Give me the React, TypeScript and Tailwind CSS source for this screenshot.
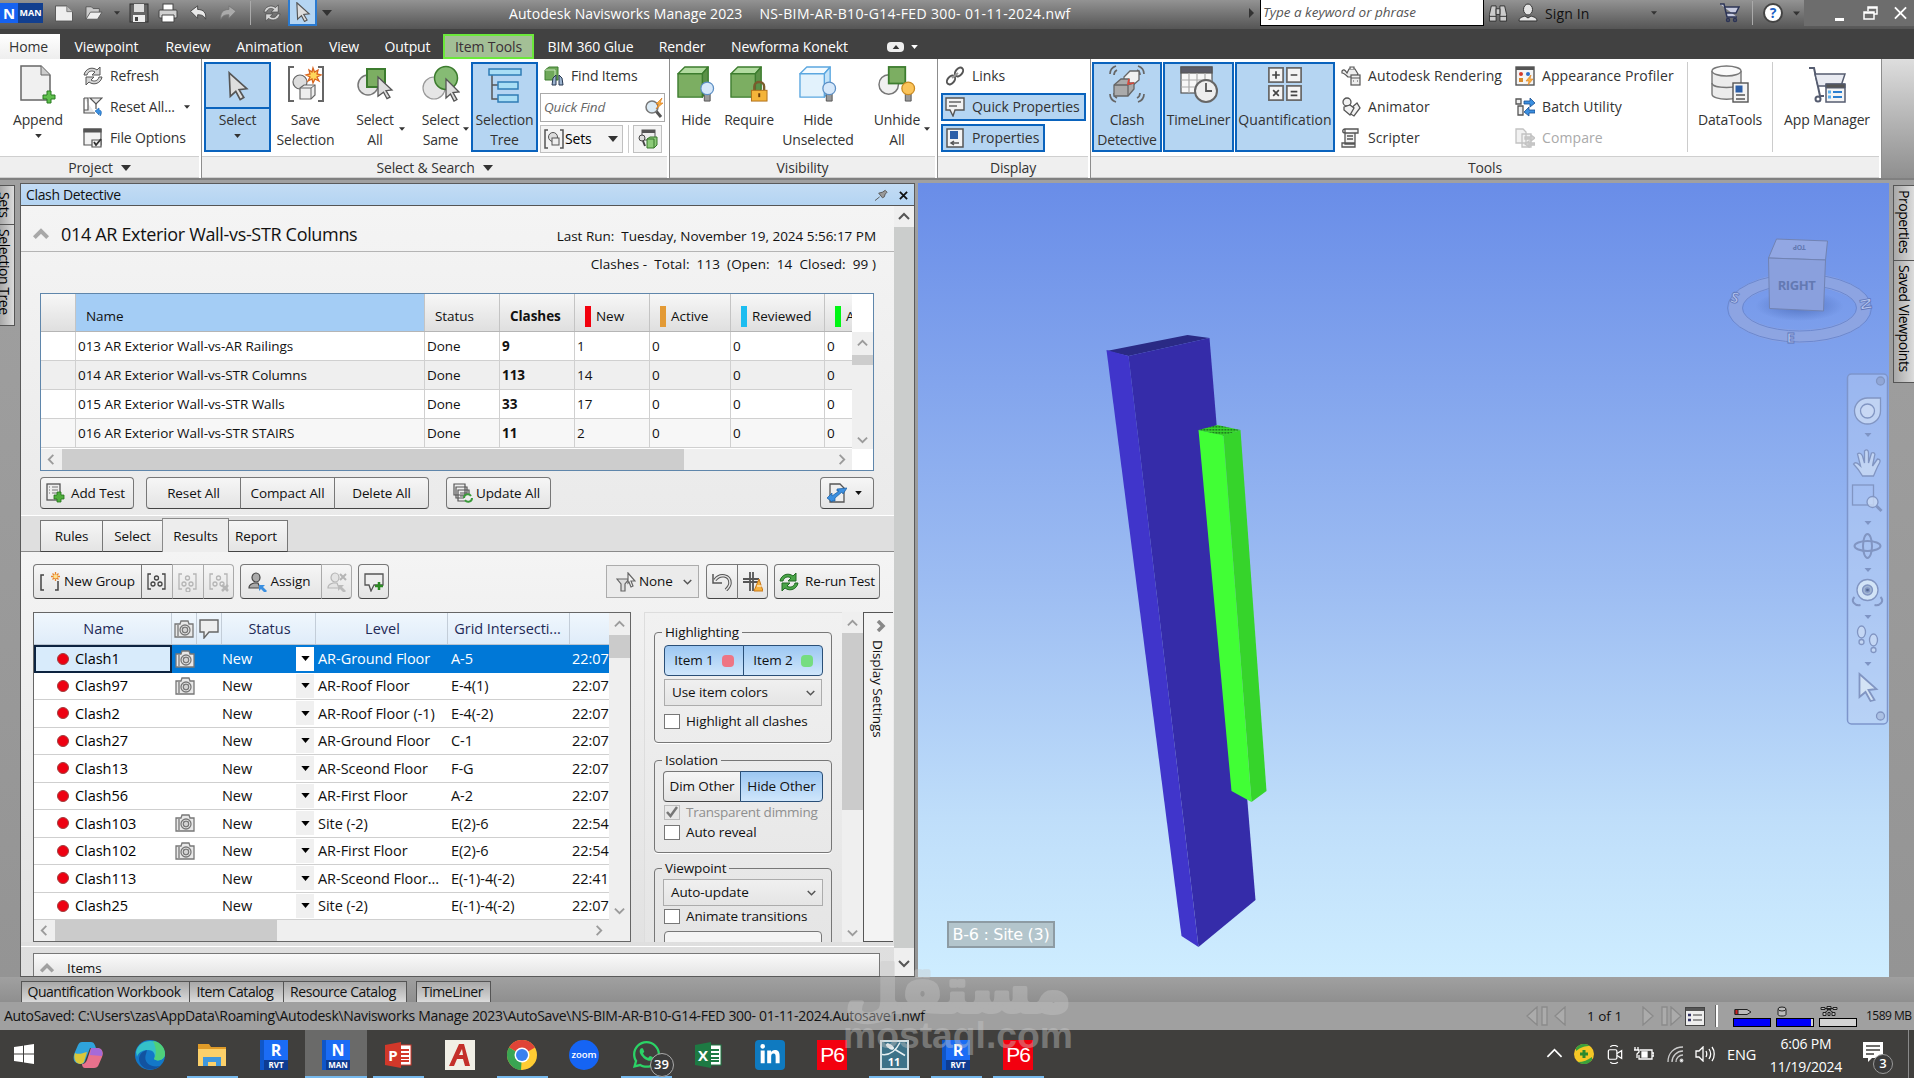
import React from 'react';
import { FaLinkedinIn, FaWhatsapp } from 'react-icons/fa';

type SvgProps = { className?: string };
type IconType = React.FC<SvgProps>;

//================== Data ==================
const ribbonTabs = [
  { label: 'Viewpoint', cls: 'w-[93px]' },
  { label: 'Review', cls: 'w-[70px]' },
  { label: 'Animation', cls: 'w-[93px]' },
  { label: 'View', cls: 'w-[56px]' },
  { label: 'Output', cls: 'w-[71px]' },
  { label: 'Item Tools', cls: 'w-[91px] bg-[#a3bf96] border-2 border-[#6be83a] text-[#3b2f36]' },
  { label: 'BIM 360 Glue', cls: 'w-[113px]' },
  { label: 'Render', cls: 'w-[70px]' },
  { label: 'Newforma Konekt', cls: 'w-[145px]' },
];

const tests = [
  ['013 AR Exterior Wall-vs-AR Railings', 'Done', '9', '1'],
  ['014 AR Exterior Wall-vs-STR Columns', 'Done', '113', '14'],
  ['015 AR Exterior Wall-vs-STR Walls', 'Done', '33', '17'],
  ['016 AR Exterior Wall-vs-STR STAIRS', 'Done', '11', '2'],
];
const testRowBg = ['bg-white', 'bg-[#efefef]', 'bg-white', 'bg-[#f7f7f7]'];

const clashes = [
  { name: 'Clash1', cam: true, level: 'AR-Ground Floor', grid: 'A-5', time: '22:07:' },
  { name: 'Clash97', cam: true, level: 'AR-Roof Floor', grid: 'E-4(1)', time: '22:07:' },
  { name: 'Clash2', cam: false, level: 'AR-Roof Floor (-1)', grid: 'E-4(-2)', time: '22:07:' },
  { name: 'Clash27', cam: false, level: 'AR-Ground Floor', grid: 'C-1', time: '22:07:' },
  { name: 'Clash13', cam: false, level: 'AR-Sceond Floor', grid: 'F-G', time: '22:07:' },
  { name: 'Clash56', cam: false, level: 'AR-First Floor', grid: 'A-2', time: '22:07:' },
  { name: 'Clash103', cam: true, level: 'Site (-2)', grid: 'E(2)-6', time: '22:54:' },
  { name: 'Clash102', cam: true, level: 'AR-First Floor', grid: 'E(2)-6', time: '22:54:' },
  { name: 'Clash113', cam: false, level: 'AR-Sceond Floor...', grid: 'E(-1)-4(-2)', time: '22:41:' },
  { name: 'Clash25', cam: false, level: 'Site (-2)', grid: 'E(-1)-4(-2)', time: '22:07:' },
];

//================== Small shapes ==================
const Caret: React.FC<SvgProps> = ({ className = '' }) => (
  <svg viewBox="0 0 10 6" className={`shrink-0 ${className}`} fill="currentColor"><path d="M0 0h10L5 6z" /></svg>
);

const Chevron: React.FC<{ dir: 'up' | 'down' | 'left' | 'right'; className?: string; w?: number }> = ({ dir, className = '', w = 2 }) => {
  const paths = { up: 'M1 8l5-5 5 5', down: 'M1 4l5 5 5-5', left: 'M8 1L3 6l5 5', right: 'M4 1l5 5-5 5' };
  return (
    <svg viewBox="0 0 12 12" className={`shrink-0 ${className}`} fill="none" stroke="currentColor" strokeWidth={w}>
      <path d={paths[dir]} />
    </svg>
  );
};

const Cursor: IconType = ({ className }) => (
  <svg viewBox="0 0 20 26" className={className}><path d="M2 1l16 14.5-7 .8 4.3 7.2-3.3 1.8-4-7.5-5 4.6z" fill="#dedede" stroke="#555" strokeWidth="1.5" /></svg>
);

//================== Quick access icons ==================
const DocIcon: IconType = ({ className }) => (
  <svg viewBox="0 0 20 18" className={className}><path d="M1 1h12l6 6v10H1z" fill="#eee" stroke="#555" /><path d="M13 1v6h6" fill="#bbb" stroke="#777" /></svg>
);
const OpenIcon: IconType = ({ className }) => (
  <svg viewBox="0 0 20 18" className={className} stroke="#555"><path d="M1 16V2h6l2 2h7v4" fill="#ccc" /><path d="M1 16L6 8h13l-5 8z" fill="#eee" /></svg>
);
const SaveIcon: IconType = ({ className }) => (
  <svg viewBox="0 0 20 20" className={className}><rect x="1" y="1" width="18" height="18" fill="#666" stroke="#333" /><rect x="5" y="1" width="10" height="8" fill="#ddd" /><rect x="4" y="12" width="12" height="7" fill="#eee" /><rect x="6" y="14" width="3" height="4" fill="#444" /></svg>
);
const PrintIcon: IconType = ({ className }) => (
  <svg viewBox="0 0 20 20" className={className} stroke="#444"><rect x="5" y="1" width="10" height="7" fill="#fff" /><rect x="1" y="7" width="18" height="8" rx="1" fill="#d0d0d0" /><path d="M4 12h12v7H4z" fill="#fff" /></svg>
);
const UndoIcon: IconType = ({ className }) => (
  <svg viewBox="0 0 20 18" className={className}><path d="M1 7l8-6v4c7 0 10 4 9 11-2-4-4-5-9-5v4z" fill="#e8e8e8" stroke="#444" /></svg>
);
const RedoIcon: IconType = ({ className }) => (
  <svg viewBox="0 0 20 18" className={className}><path d="M19 7l-8-6v4C4 5 1 9 2 16c2-4 4-5 9-5v4z" fill="#aaa" stroke="#777" /></svg>
);
const SyncIcon: React.FC<{ className?: string; fill?: string; stroke?: string }> = ({ className, fill = '#d6d6d6', stroke = '#555' }) => (
  <svg viewBox="0 0 20 20" className={className} fill={fill} stroke={stroke} strokeWidth="1">
    <path d="M1 9C2 3 9 0 14 4l3-3v8H9l3-3C9 4 5 5 4 9z" />
    <path d="M19 11c-1 6-8 9-13 5l-3 3v-8h8l-3 3c3 2 7 1 8-3z" />
  </svg>
);
const BinocularsIcon: IconType = ({ className }) => (
  <svg viewBox="0 0 20 20" className={className} fill="#ccc" stroke="#333"><path d="M3 2h5v16H1V11zM12 2h5l2 9v7h-7z" /><path d="M8 5h4v6H8z" /><path d="M1 13h7M12 13h7" /></svg>
);
const PersonIcon: IconType = ({ className }) => (
  <svg viewBox="0 0 20 20" className={className} fill="#e4e4e4" stroke="#333"><ellipse cx="10" cy="6.500" rx="4.500" ry="5.500" /><path d="M1 18c0-4 4-4 6-5l3 2 3-2c2 1 6 1 6 5z" /></svg>
);
const CartIcon: IconType = ({ className }) => (
  <svg viewBox="0 0 20 20" className={className} fill="none" stroke="#2c3456" strokeWidth="1.500"><path d="M0 1h4l3 13h10M4.500 4H19l-3 6H6" fill="#c8cce0" /><circle cx="8" cy="17" r="1.500" /><circle cx="15" cy="17" r="1.500" /></svg>
);

//================== Ribbon icons ==================
const AppendIcon: IconType = ({ className }) => (
  <svg viewBox="0 0 38 40" className={className}><path d="M2 2h20l9 9v25H2z" fill="#f0f0f0" stroke="#666" strokeWidth="1.500" /><path d="M22 2v9h9" fill="#ccc" stroke="#666" /><path d="M28 27h4v4h4v4h-4v4h-4v-4h-4v-4h4z" fill="#5fbf4c" stroke="#287a20" /></svg>
);
const ResetIcon: IconType = ({ className }) => (
  <svg viewBox="0 0 20 20" className={className} fill="#e8e8e8" stroke="#555" strokeWidth="1.200"><path d="M1 1v15h11M1 1h4v12H1M7 1h12l-6 6z" /><path d="M13 7v5" /><path d="M12 14l4-3v2c3 0 3 4 1 6 0-2 0-3-1-3v2z" fill="#3b8fe0" stroke="#1a62ab" strokeWidth=".6" /></svg>
);
const FileOptIcon: IconType = ({ className }) => (
  <svg viewBox="0 0 20 20" className={className} fill="#f3f3f3" stroke="#555" strokeWidth="1.200"><path d="M1 1h17v16H1z" /><path d="M1 1h17v3H1z" fill="#555" /><path d="M9 12h9v7H9z" /><path d="M11 14l2 3 5-6" fill="none" stroke="#333" strokeWidth="1.800" /></svg>
);
const SaveSelIcon: IconType = ({ className }) => (
  <svg viewBox="0 0 38 38" className={className} fill="none" stroke="#666" strokeWidth="2"><path d="M7 2H2v34h5M31 2h5v34h-5" /><circle cx="13" cy="17" r="7" fill="#ddd" strokeWidth="1.200" /><path d="M13 23l4-3h11v10l-4 4H13z" fill="#eee" strokeWidth="1.200" /><path d="M13 23h11v11M24 23l4-3" strokeWidth="1" /><path d="M26 3l1.500 4L31 5l-1 4 4 1-4 2 2 4-4-2-2 4-1-4-4 2 2-4-4-2 4-1-1-4 3 2z" fill="#ffd65a" stroke="#d9641f" strokeWidth="1.300" /></svg>
);
const SelAllIcon: IconType = ({ className }) => (
  <svg viewBox="0 0 38 38" className={className}><circle cx="12" cy="20" r="10" fill="#e6e6e6" stroke="#777" strokeWidth="1.500" /><rect x="11" y="4" width="18" height="18" fill="#7cae62" stroke="#3c7c2e" strokeWidth="2" /><path d="M22 12l14 13-6 .7 4 6.500-3 1.500-3.500-6.500-5.500 4z" fill="#ddd" stroke="#555" strokeWidth="1.300" /></svg>
);
const SelSameIcon: IconType = ({ className }) => (
  <svg viewBox="0 0 38 38" className={className}><circle cx="12" cy="23" r="11" fill="#e6e6e6" stroke="#999" strokeWidth="1.200" /><circle cx="24" cy="13" r="11.500" fill="#86bb74" stroke="#3c7c2e" strokeWidth="1.500" /><path d="M24 14l13 13-6 .6 4 7-3 1.500-3.500-7-4.500 4z" fill="#ddd" stroke="#555" strokeWidth="1.300" /></svg>
);
const TreeIcon: IconType = ({ className }) => (
  <svg viewBox="0 0 34 36" className={className} fill="#a9def5" stroke="#2f7cb5" strokeWidth="1.500"><path d="M4 8v24h6M4 18h6" fill="none" stroke="#555" /><rect x="1" y="2" width="32" height="6" /><rect x="10" y="15" width="20" height="7" /><rect x="10" y="28" width="20" height="7" /></svg>
);
const Cube: React.FC<{ front: string; top: string; side: string; line: string }> = ({ front, top, side, line }) => (
  <g stroke={line} strokeWidth="1.400" strokeLinejoin="round">
    <path d="M1 9l7-7h24l-6 7z" fill={top} /><path d="M26 9l6-7v23l-6 8z" fill={side} /><path d="M1 9h25v24H1z" fill={front} />
  </g>
);
const Bulb: React.FC<{ fill: string; line: string }> = ({ fill, line }) => (
  <g><path d="M28 29h6v8h-6z" fill="#999" stroke="#555" /><circle cx="31" cy="24" r="6.500" fill={fill} stroke={line} strokeWidth="1.300" /></g>
);
const HideIcon: IconType = ({ className }) => (
  <svg viewBox="0 0 39 39" className={className}><Cube front="#7cae62" top="#b2dba0" side="#5b9147" line="#3c7c2e" /><Bulb fill="#d6e8fa" line="#5d8fc4" /></svg>
);
const RequireIcon: IconType = ({ className }) => (
  <svg viewBox="0 0 39 39" className={className}><Cube front="#7cae62" top="#b2dba0" side="#5b9147" line="#3c7c2e" /><path d="M25 26v-4c0-6 10-6 10 0v4" fill="none" stroke="#7a5c2c" strokeWidth="2.500" /><rect x="22" y="26" width="16" height="11" fill="#f4b43a" stroke="#b0701a" /><path d="M30 29v4" stroke="#6a3c0a" strokeWidth="2" /></svg>
);
const HideUnselIcon: IconType = ({ className }) => (
  <svg viewBox="0 0 39 39" className={className}><Cube front="#e2f2fc" top="#f4fbff" side="#c3e3f8" line="#5ba7e0" /><Bulb fill="#d6e8fa" line="#5d8fc4" /></svg>
);
const UnhideIcon: IconType = ({ className }) => (
  <svg viewBox="0 0 39 39" className={className}><circle cx="11" cy="20" r="10" fill="#f0f0f0" stroke="#777" strokeWidth="1.500" /><rect x="11" y="2" width="17" height="17" fill="#7cae62" stroke="#3c7c2e" strokeWidth="1.800" /><Bulb fill="#fbc45a" line="#c98a22" /></svg>
);
const FindIcon: IconType = ({ className }) => (
  <svg viewBox="0 0 20 20" className={className}><path d="M1 4l4-3h9v13H1z" fill="#6fa85a" stroke="#3c7c2e" /><path d="M1 4h10v11" fill="none" stroke="#c9e6bd" /><path d="M9 12l3-3v10H8zM15 9l3 3 1 7h-4z" fill="#9db4d0" stroke="#26374f" /></svg>
);
const SearchBoltIcon: IconType = ({ className }) => (
  <svg viewBox="0 0 20 22" className={className}><path d="M12 14l5 6" stroke="#555" strokeWidth="3" /><circle cx="8" cy="10" r="6" fill="#dcebf5" stroke="#777" strokeWidth="1.500" /><path d="M18 1l-6 6h3l-3 5 7-6h-3z" fill="#f8b040" stroke="#dc7d1c" strokeWidth=".7" /></svg>
);
const SetsIcon: IconType = ({ className }) => (
  <svg viewBox="0 0 20 20" className={className} fill="none" stroke="#555" strokeWidth="1.500"><path d="M4 1H1v18h3M16 1h3v18h-3" /><circle cx="9" cy="8" r="4.500" fill="#ddd" strokeWidth="1" /><rect x="8" y="9" width="7" height="7" fill="#eee" strokeWidth="1" /></svg>
);
const InspectIcon: IconType = ({ className }) => (
  <svg viewBox="0 0 20 20" className={className}><rect x="4" y="1" width="13" height="10" fill="#eee" stroke="#555" /><path d="M4 1h13v3H4z" fill="#555" /><circle cx="4" cy="9" r="3" fill="#ddd" stroke="#444" /><path d="M5 12l2 5" stroke="#444" strokeWidth="2" /><path d="M9 10l3-2h7v8l-3 3H9z" fill="#8ccb78" stroke="#36772a" /><path d="M9 10h7v9" fill="none" stroke="#36772a" /></svg>
);
const LinkIcon: IconType = ({ className }) => (
  <svg viewBox="0 0 20 20" className={className} fill="none" stroke="#555" strokeWidth="2"><ellipse cx="14" cy="6" rx="5" ry="3.300" transform="rotate(-50 14 6)" /><ellipse cx="6" cy="14" rx="5" ry="3.300" transform="rotate(-50 6 14)" /><path d="M7 12l6-5" stroke="#999" /></svg>
);
const BubbleIcon: IconType = ({ className }) => (
  <svg viewBox="0 0 20 20" className={className}><path d="M1 1h18v12h-9l-2 6-3-6H1z" fill="#f2f2f2" stroke="#555" strokeWidth="1.400" /><path d="M4 5h12M4 9h8" stroke="#666" strokeWidth="1.500" /></svg>
);
const PropsIcon: IconType = ({ className }) => (
  <svg viewBox="0 0 20 20" className={className}><rect x="2" y="1" width="16" height="18" fill="#f4f4f4" stroke="#555" strokeWidth="1.500" /><rect x="5" y="3" width="8" height="8" fill="#2c5fa8" /><path d="M6 15h8M9 13l-3 2 3 2" fill="none" stroke="#555" strokeWidth="1.500" /></svg>
);
const ClashIcon: IconType = ({ className }) => (
  <svg viewBox="0 0 38 38" className={className} fill="none" stroke="#666" strokeWidth="1.700"><path d="M2 9c0-5 3-7 6-8M6 10c0-3 1-4 3-5M36 9c0-5-3-7-6-8M32 10c0-3-1-4-3-5M2 29c0 5 3 7 6 8M6 28c0 3 1 4 3 5M36 29c0 5-3 7-6 8M32 28c0 3-1 4-3 5" /><path d="M16 12l6-6h9v9l-7 6h-8z" fill="#f1f1f1" strokeWidth="1.300" /><path d="M6 20l7-6h8v4h5v6l-6 7H6z" fill="#aaa" strokeWidth="1.300" /><path d="M6 20h14v11M20 20l6-2" strokeWidth="1.300" /><path d="M21 14l-1 5 6-1" stroke="#d9483b" /></svg>
);
const TimelinerIcon: IconType = ({ className }) => (
  <svg viewBox="0 0 38 38" className={className} stroke="#555" strokeWidth="1.200"><rect x="1" y="2" width="31" height="26" fill="#f7f7f7" /><rect x="1" y="2" width="31" height="6" fill="#5b5b66" /><path d="M9 8v20M17 8v20M25 8v20M1 15h31M1 22h31" stroke="#aaa" /><circle cx="26" cy="26" r="11" fill="#eee" stroke="#666" strokeWidth="2" /><path d="M26 18v8h6" fill="none" strokeWidth="1.800" /></svg>
);
const QuantIcon: IconType = ({ className }) => (
  <svg viewBox="0 0 38 38" className={className} stroke="#666" strokeWidth="1.800"><g fill="#f4f4f4"><rect x="2" y="2" width="15" height="15" /><rect x="21" y="2" width="15" height="15" /><rect x="2" y="21" width="15" height="15" /><rect x="21" y="21" width="15" height="15" /></g><path d="M9.500 5.500v8M5.500 9.500h8M25 9.500h7M6.500 25.500l6 6m0-6l-6 6M25 27h7M25 31h7" stroke="#444" /></svg>
);
const RenderingIcon: IconType = ({ className }) => (
  <svg viewBox="0 0 20 20" className={className} fill="#eee" stroke="#555" strokeWidth="1.200"><path d="M1 5c2-2 3-1 5 2l2-4h6l3 5-2 3H7C5 9 3 7 1 7z" /><path d="M9 3V1h4v2" /><rect x="10" y="9" width="9" height="10" /><path d="M10 12h9M12 15h1m3 0h1" /></svg>
);
const AnimatorIcon: IconType = ({ className }) => (
  <svg viewBox="0 0 20 20" className={className} fill="#f2f2f2" stroke="#555" strokeWidth="1.300"><path d="M8 13l8-7 3 5-6 8-5-3z" /><circle cx="6" cy="5" r="4" /><path d="M3 10l6-2 4 3-4 7-6-5z" /></svg>
);
const ScripterIcon: IconType = ({ className }) => (
  <svg viewBox="0 0 20 20" className={className} fill="#f2f2f2" stroke="#555" strokeWidth="1.300"><path d="M4 1h13v4h-3v11H4zM1 15h13v4H1zM4 1C1 1 1 5 4 5h10" /><path d="M6 8h6M6 11h6" /></svg>
);
const AppearanceIcon: IconType = ({ className }) => (
  <svg viewBox="0 0 20 20" className={className}><rect x="1" y="1" width="18" height="18" fill="#f4f4f4" stroke="#555" strokeWidth="1.400" /><path d="M1 1h18v3H1z" fill="#555" /><circle cx="6" cy="8" r="2" fill="#d43a2a" /><circle cx="13" cy="8" r="2" fill="#2c6fc8" /><rect x="4" y="12" width="4" height="4" fill="#d98a2a" /><path d="M16 9l-5 6h3l-1 4 5-6h-3z" fill="#f8b040" stroke="#dc7d1c" strokeWidth=".6" /></svg>
);
const BatchIcon: IconType = ({ className }) => (
  <svg viewBox="0 0 20 20" className={className}><path d="M1 2h5v5H1zM3 9h5v9H3z" fill="#eee" stroke="#555" strokeWidth="1.300" /><path d="M9 4h6V1l5 5-5 4V7H9zM20 13h-6v-3l-5 5 5 4v-3h6z" fill="#3b8fe0" stroke="#1a4f90" strokeWidth=".8" /></svg>
);
const CompareIcon: IconType = ({ className }) => (
  <svg viewBox="0 0 20 20" className={className} fill="#f1f1f1" stroke="#c2c2c2" strokeWidth="1.300"><path d="M1 1h7l3 3v11H1zM7 6h9v13H7z" /><path d="M10 9h6V7l4 3-4 3v-2h-6zM20 15h-6v-2l-4 3 4 3v-2h6z" fill="#d0d0d0" /></svg>
);
const DataToolsIcon: IconType = ({ className }) => (
  <svg viewBox="0 0 38 38" className={className} stroke="#777" strokeWidth="1.400"><path d="M1 6v23c0 7 29 7 29 0V6" fill="#ececec" /><ellipse cx="15.500" cy="6" rx="14.500" ry="5" fill="#fafafa" /><path d="M1 18c0 6 29 6 29 0" fill="none" /><rect x="22" y="18" width="15" height="19" fill="#f4f4f4" stroke="#555" /><rect x="24.500" y="20.500" width="7" height="7" fill="#2c5fa8" stroke="none" /><path d="M25 30h9M25 34h9" stroke="#555" /></svg>
);
const AppManIcon: IconType = ({ className }) => (
  <svg viewBox="0 0 38 38" className={className} fill="none" stroke="#555c70" strokeWidth="2"><path d="M1 3h5l6 28h4" /><path d="M7 9h30l-4 12H10z" fill="#e9ebf2" strokeWidth="1.500" /><circle cx="10" cy="34" r="2.500" /><rect x="18" y="19" width="19" height="18" fill="#f4f4f4" strokeWidth="1.500" /><path d="M18 19h19v4H18z" fill="#555" strokeWidth="1" /><path d="M25 27h9M25 32h9" stroke="#2c7fd0" /><path d="M20 27h3M20 32h3" stroke="#58b0f0" strokeWidth="3" /></svg>
);

//================== Clash panel icons ==================
const AddTestIcon: IconType = ({ className }) => (
  <svg viewBox="0 0 20 20" className={className}><rect x="2" y="1" width="13" height="16" fill="#eee" stroke="#555" strokeWidth="1.300" /><path d="M4 4h1m2 0h6M4 7h1m2 0h6M4 10h1m2 0h6" stroke="#777" /><path d="M12 9h4v3h3v4h-3v3h-4v-3H9v-4h3z" fill="#4fae3c" stroke="#23711b" strokeWidth=".8" /></svg>
);
const UpdateIcon: IconType = ({ className }) => (
  <svg viewBox="0 0 20 20" className={className} fill="#eee" stroke="#555" strokeWidth="1.200"><path d="M1 1h11v11H1zM3 4h11v11H3zM5 7h11v11H5z" /><path d="M7 10h7M7 13h4" /><circle cx="15" cy="15" r="4" fill="#eee" stroke="none" /><path d="M11 15c0-4 5-5 7-2m1 2c0 4-5 5-7 2" fill="none" stroke="#3a9a3a" strokeWidth="2" /></svg>
);
const ExportIcon: IconType = ({ className }) => (
  <svg viewBox="0 0 20 20" className={className}><path d="M3 1h10l4 4v14H3z" fill="#eee" stroke="#555" strokeWidth="1.300" /><path d="M0 15l5-5v3l7-5h-2V6l10-1-4 6-1-2-7 6v3H5v1z" fill="#3b8fe0" stroke="#1a5c9f" strokeWidth=".7" /></svg>
);
const NewGroupIcon: IconType = ({ className }) => (
  <svg viewBox="0 0 20 20" className={className} fill="none"><path d="M4 3H1v15h3M15 18h3V9" stroke="#444" strokeWidth="1.500" /><path d="M15.500 0v9M11 4.500h9M12.500 1.500l6 6m0-6l-6 6" stroke="#e8852c" strokeWidth="1.300" /><circle cx="15.500" cy="4.500" r="2" fill="#ffe08a" /></svg>
);
const GroupIcon: React.FC<{ className?: string; mark?: 'plus' | 'x' }> = ({ className, mark }) => (
  <svg viewBox="0 0 20 20" className={className} fill="none" stroke="currentColor" strokeWidth="1.300"><path d="M4 2H1v15h3M15 2h3v15h-3" /><circle cx="9.500" cy="6" r="2" /><circle cx="6" cy="12" r="2" /><circle cx="13" cy="12" r="2" />{mark === 'x' && <path d="M13 13l6 6m0-6l-6 6" strokeWidth="2.500" />}{mark === 'plus' && <circle cx="10" cy="18" r="2" />}</svg>
);
const AssignIcon: React.FC<{ className?: string; off?: boolean }> = ({ className, off }) => (
  <svg viewBox="0 0 20 20" className={className}><g fill={off ? '#e4e4e4' : '#aaa'} stroke={off ? '#b5b5b5' : '#444'} strokeWidth="1.200"><ellipse cx="8" cy="5.500" rx="4" ry="4.500" /><path d="M1 16c0-4 3-4 5-5h4l2 5z" /></g><path d="M19 19l-4-4 2-2h-6v6l2-2 4 4z" fill={off ? '#bbb' : '#3b8fe0'} />{off && <path d="M13 2l6 6m0-6l-6 6" stroke="#b5b5b5" strokeWidth="2" />}</svg>
);
const CommentAddIcon: IconType = ({ className }) => (
  <svg viewBox="0 0 20 20" className={className}><path d="M1 2h18v11h-9l-3 6-2-6H1z" fill="#eee" stroke="#555" strokeWidth="1.300" /><path d="M15 10v8M11 14h8" stroke="#2c8a24" strokeWidth="2.500" /></svg>
);
const CameraIcon: IconType = ({ className }) => (
  <svg viewBox="0 0 20 18" className={className} stroke="#777" strokeWidth="1.300"><path d="M1 4h5l1-3h7l1 3h4v13H1z" fill="#e8e8e8" /><circle cx="11" cy="10" r="5" fill="#fafafa" /><circle cx="11" cy="10" r="2.800" fill="#d4d4d4" /><path d="M4 5v11" /></svg>
);
const CommentIcon: IconType = ({ className }) => (
  <svg viewBox="0 0 20 20" className={className}><path d="M1 1h18v12h-9l-5 6V13H1z" fill="#eee" stroke="#666" strokeWidth="1.400" /></svg>
);
const FunnelIcon: IconType = ({ className }) => (
  <svg viewBox="0 0 20 20" className={className} fill="#ddd" stroke="#666" strokeWidth="1.200"><path d="M1 7h12l-4 5v7H5v-7z" /><path d="M12 1l7 8h-4l2 5-2 1-2-5-1 1z" fill="#f4f4f4" /></svg>
);
const ResetArrowIcon: IconType = ({ className }) => (
  <svg viewBox="0 0 20 18" className={className} fill="none"><path d="M3 7c5-7 15-5 15 3 0 3-2 5-4 7" stroke="#555" strokeWidth="3.500" /><path d="M3 7c5-7 15-5 15 3 0 3-2 5-4 7" stroke="#e6e6e6" strokeWidth="1.500" /><path d="M1 1v9h9" stroke="#555" strokeWidth="1.500" /></svg>
);
const ConeIcon: IconType = ({ className }) => (
  <svg viewBox="0 0 20 20" className={className}><path d="M7 0v19M10 0v19M0 7h16M0 10h16" stroke="#555" strokeWidth="1.800" /><path d="M16 7l4 12h-9z" fill="#f6b13c" stroke="#c9791b" /><path d="M14 14h5" stroke="#fff" /></svg>
);

//================== Shared pieces ==================
const BigButton: React.FC<{ icon: IconType; lines: string[]; width: string; active?: boolean; iconCls?: string; caret?: string }> = ({ icon: Icon, lines, width, active, iconCls = 'w-[38px] h-[38px]', caret }) => (
  <div className={`flex h-[90px] shrink-0 flex-col items-center ${width} ${active ? 'border-2 border-[#0a63bd] bg-[#b5d5f2] pt-px' : 'pt-[3px]'}`}>
    <Icon className={iconCls} />
    <div className="mt-[7px] flex flex-col items-center leading-[19.5px]">
      {lines.map((l, i) => (
        <span key={l} className="flex items-center whitespace-nowrap">
          {caret && i === 1 && <i className="w-[26px]" />}
          {l}
          {caret && i === 1 && <span className="flex w-[26px]"><Caret className={`-mt-3 h-[4px] w-[6px] text-[#333] ${caret}`} /></span>}
        </span>
      ))}
    </div>
  </div>
);

const SmallItem: React.FC<{ icon: IconType; label: string; active?: boolean; off?: boolean; width?: string; caret?: boolean }> = ({ icon: Icon, label, active, off, width = '', caret }) => (
  <div className={`flex h-[28px] items-center gap-[7px] whitespace-nowrap border-2 px-[2px] ${width} ${active ? 'border-[#0a63bd] bg-[#b5d5f2]' : 'border-transparent'} ${off ? 'text-[#aaa]' : ''}`}>
    <Icon className="h-5 w-5 shrink-0" />
    <span className="pt-px">{label}</span>
    {caret && <Caret className="ml-0.5 h-[4px] w-[6px] text-[#333]" />}
  </div>
);

const Panel: React.FC<{ title: string; width: string; caret?: boolean; children: React.ReactNode }> = ({ title, width, caret, children }) => (
  <div className={`flex h-[119px] shrink-0 flex-col border-r border-[#8d8d8d] bg-white ${width}`}>
    <div className="flex h-[97px] items-start pt-[3px]">{children}</div>
    <div className="mr-0.5 flex h-[22px] items-center justify-center gap-2 border-y border-[#cfcfcf] bg-[#efefef] pt-0.5">
      {title}
      {caret && <Caret className="h-[6px] w-[10px] text-[#333]" />}
    </div>
  </div>
);

const Check: React.FC<{ label: string; off?: boolean }> = ({ label, off }) => (
  <div className={`flex h-[16px] items-center gap-[6px] whitespace-nowrap leading-4 ${off ? 'tracking-[-0.25px] text-[#8f8f8f]' : ''}`}>
    <span className={`flex h-[15px] w-[16px] shrink-0 items-center justify-center border ${off ? 'border-[#bbb] bg-[#e8e8e8]' : 'border-[#777] bg-white'}`}>
      {off && <svg viewBox="0 0 12 12" className="h-3 w-3" fill="none" stroke="#777" strokeWidth="2.500"><path d="M1 6l3.500 4L11 1" /></svg>}
    </span>
    {label}
  </div>
);

const Combo: React.FC<{ label: string; cls: string }> = ({ label, cls }) => (
  <div className={`flex items-center justify-between border border-[#acacac] bg-gradient-to-b from-[#f0f0f0] to-[#e5e5e5] pl-[7px] pr-[6px] ${cls}`}>
    {label}
    <Chevron dir="down" className="h-[9px] w-[9px] text-[#555]" />
  </div>
);

const btn = 'flex items-center justify-center border border-[#777] border-b-[#444] bg-gradient-to-b from-[#f6f6f6] to-[#e4e4e4]';
const toggled = 'flex items-center justify-center border border-[#2a4f77] bg-gradient-to-b from-[#9cc7f2] to-[#cfe6fb]';

//================== Title bar ==================
const TitleBar = () => (
  <div className="flex h-[29px] items-start bg-gradient-to-b from-[#939393] to-[#555] text-[14.5px]">
    <div className="flex h-[26px] w-[509px] items-center">
      <span className="flex h-[20px] w-[18px] items-center justify-center bg-[#1662f0] text-[15px] font-bold text-white">N</span>
      <span className="flex h-[20px] w-[25px] items-center justify-center bg-[#123f8f] text-[9px] font-bold text-white">MAN</span>
      <DocIcon className="ml-[11px] h-[17px] w-5" />
      <OpenIcon className="ml-2.5 h-4 w-5" />
      <Caret className="ml-[10px] h-[4px] w-[6px] text-[#333]" />
      <SaveIcon className="ml-[9px] h-5 w-5" />
      <PrintIcon className="ml-[9px] h-5 w-5" />
      <UndoIcon className="ml-[11px] h-4 w-[19px]" />
      <RedoIcon className="ml-[11px] h-4 w-[18px]" />
      <span className="ml-[13px] h-6 w-px bg-[#aaa]" />
      <SyncIcon className="ml-[11px] h-[18px] w-5" />
      <span className="ml-[6px] flex h-[26px] w-[29px] items-center justify-center border-2 border-t-0 border-[#2a7ad0] bg-[#b5d5f2]">
        <Cursor className="h-[20px] w-[16px]" />
      </span>
      <Caret className="ml-[5px] h-[6px] w-[10px] text-[#333]" />
    </div>
    <div className="flex h-[29px] w-[740px] items-center gap-[17px] whitespace-pre text-[14px] text-white">
      <span className="tracking-[0.08px]">Autodesk Navisworks Manage 2023</span>
      <span className="tracking-[0.35px]">NS-BIM-AR-B10-G14-FED 300- 01-11-2024.nwf</span>
    </div>
    <div className="flex h-[26px] w-[555px] items-center">
      <svg viewBox="0 0 5 10" className="h-[10px] w-[5px] shrink-0" fill="#333"><path d="M0 0l5 5-5 5z" /></svg>
      <div className="ml-[6px] flex h-[26px] w-[224px] shrink-0 items-center whitespace-nowrap border border-t-0 border-black bg-white pl-[2px] text-[13.5px] italic text-[#555]">Type a keyword or phrase</div>
      <BinocularsIcon className="ml-1 h-[19px] w-[20px]" />
      <PersonIcon className="ml-[10px] h-5 w-5" />
      <span className="ml-[7px] w-[47px] whitespace-nowrap pt-0.5 text-[14px] tracking-[0.15px] text-[#111]">Sign In</span>
      <Caret className="ml-[59px] h-[4px] w-[6px] text-[#333]" />
      <CartIcon className="ml-[63px] h-5 w-5" />
      <span className="ml-3 h-6 w-px bg-[#aaa]" />
      <span className="ml-[10px] flex h-5 w-5 items-center justify-center rounded-full border-2 border-[#444] bg-white text-[14px] font-bold text-[#1d5fc4]">?</span>
      <Caret className="ml-[10px] h-[5px] w-[7px] text-[#333]" />
    </div>
    <div className="flex h-[26px] flex-1 items-center bg-[#6d6d6d] pl-[31px]">
      <span className="mt-[12px] h-[3px] w-[9px] bg-white" />
      <svg viewBox="0 0 16 14" className="ml-[19px] h-[14px] w-4" fill="none" stroke="#fff" strokeWidth="1.500"><path d="M5 5V1h9v7h-3M5 2h9" /><path d="M1 6h10v7H1zM1 7h10" /></svg>
      <svg viewBox="0 0 14 14" className="ml-[15px] h-[14px] w-[13px]" stroke="#fff" strokeWidth="2"><path d="M1 1l12 12M13 1L1 13" /></svg>
    </div>
  </div>
);

const RibbonTabs = () => (
  <div className="flex h-[30px] items-end bg-[#414141] text-[14px] tracking-[-0.1px] text-white">
    <span className="flex h-[25px] w-[60px] items-center justify-center bg-gradient-to-b from-white to-[#eee] pr-[3px] pt-0.5 text-[#333]">Home</span>
    {ribbonTabs.map(t => (
      <span key={t.label} className={`flex h-[25px] items-center justify-center whitespace-nowrap pt-0.5 ${t.cls}`}>{t.label}</span>
    ))}
    <span className="mb-[7px] ml-[25px] flex h-[10px] w-[17px] items-center justify-center rounded-sm bg-[#eee]"><Caret className="h-1 w-2 rotate-180 text-[#333]" /></span>
    <Caret className="mb-[10px] ml-[7px] h-[4px] w-[7px]" />
  </div>
);

//================== Ribbon ==================
const Ribbon = () => (
  <div className="flex h-[121px] border-b-2 border-[#808080] bg-gradient-to-b from-[#dedede] to-[#8f8f8f] text-[14px] tracking-[-0.15px] text-[#333]">
    <Panel title="Project" width="w-[202px]" caret>
      <div className="flex w-[76px] flex-col items-center pt-[2px]">
        <AppendIcon className="h-[40px] w-[38px]" />
        <span className="mt-[6px] leading-[20px]">Append</span>
        <Caret className="mt-[4px] h-[4px] w-[7px]" />
      </div>
      <div className="flex flex-col gap-[3px] pl-[3px]">
        <SmallItem icon={SyncIcon} label="Refresh" />
        <SmallItem icon={ResetIcon} label="Reset All..." caret />
        <SmallItem icon={FileOptIcon} label="File Options" />
      </div>
    </Panel>
    <Panel title="Select & Search" width="w-[468px]" caret>
      <div className="ml-[2px] flex h-[90px] w-[67px] flex-col items-center border-2 border-[#0a63bd] bg-[#b5d5f2]">
        <div className="flex h-[45px] w-full items-center justify-center border-b-2 border-[#0a63bd]"><Cursor className="h-[34px] w-[22px]" /></div>
        <span className="mt-px leading-[20px]">Select</span>
        <Caret className="mt-[4px] h-[4px] w-[7px]" />
      </div>
      <BigButton icon={SaveSelIcon} lines={['Save', 'Selection']} width="w-[69px]" />
      <BigButton icon={SelAllIcon} lines={['Select', 'All']} width="w-[70px]" caret="ml-[16px]" />
      <BigButton icon={SelSameIcon} lines={['Select', 'Same']} width="w-[61px]" caret="ml-[5px]" />
      <BigButton icon={TreeIcon} lines={['Selection', 'Tree']} width="w-[67px]" active iconCls="mt-0.5 w-[34px] h-[36px]" />
      <div className="flex flex-col gap-[3px] pl-[2px]">
        <SmallItem icon={FindIcon} label="Find Items" />
        <div className="flex h-[29px] w-[125px] items-center justify-between border border-[#aaa] bg-white pl-[3px] text-[13.5px] italic text-[#666]">
          Quick Find
          <SearchBoltIcon className="h-[22px] w-5" />
        </div>
        <div className="flex items-center">
          <div className="flex h-[28px] w-[83px] items-center border border-[#c0c0c0] bg-[#f4f4f4] pl-[3px] text-black">
            <SetsIcon className="h-5 w-5" />
            <span className="ml-px pt-px">Sets</span>
            <Caret className="ml-[16px] h-[6px] w-[10px] text-[#333]" />
          </div>
          <span className="ml-[5px] h-[28px] w-px bg-[#ccc]" />
          <div className="ml-[4px] flex h-[28px] w-[29px] items-center justify-center border border-[#c0c0c0] bg-[#f4f4f4]"><InspectIcon className="h-5 w-5" /></div>
        </div>
      </div>
    </Panel>
    <Panel title="Visibility" width="w-[268px]">
      <BigButton icon={HideIcon} lines={['Hide']} width="w-[52px]" />
      <BigButton icon={RequireIcon} lines={['Require']} width="w-[54px]" />
      <BigButton icon={HideUnselIcon} lines={['Hide', 'Unselected']} width="w-[84px]" />
      <BigButton icon={UnhideIcon} lines={['Unhide', 'All']} width="w-[74px]" caret="ml-[19px]" />
    </Panel>
    <Panel title="Display" width="w-[153px]">
      <div className="flex flex-col items-start gap-[3px] pl-[3px] tracking-[-0.05px]">
        <SmallItem icon={LinkIcon} label="Links" />
        <SmallItem icon={BubbleIcon} label="Quick Properties" active width="w-[145px]" />
        <SmallItem icon={PropsIcon} label="Properties" active width="w-[104px]" />
      </div>
    </Panel>
    <Panel title="Tools" width="w-[791px]">
      <BigButton icon={ClashIcon} lines={['Clash', 'Detective']} width="ml-px w-[70px]" active />
      <BigButton icon={TimelinerIcon} lines={['TimeLiner']} width="ml-px w-[71px]" active />
      <BigButton icon={QuantIcon} lines={['Quantification']} width="ml-px w-[100px] tracking-[0.05px]" active iconCls="w-[36px] h-[38px]" />
      <div className="flex w-[175px] shrink-0 flex-col gap-[3px] pl-[2px] tracking-[0.12px]">
        <SmallItem icon={RenderingIcon} label="Autodesk Rendering" />
        <SmallItem icon={AnimatorIcon} label="Animator" />
        <SmallItem icon={ScripterIcon} label="Scripter" />
      </div>
      <div className="flex w-[177px] shrink-0 flex-col gap-[3px] pl-px tracking-[0.1px]">
        <SmallItem icon={AppearanceIcon} label="Appearance Profiler" />
        <SmallItem icon={BatchIcon} label="Batch Utility" />
        <SmallItem icon={CompareIcon} label="Compare" off />
      </div>
      <div className="flex border-l border-[#ccc]"><BigButton icon={DataToolsIcon} lines={['DataTools']} width="w-[84px]" /></div>
      <div className="flex border-l border-[#ccc]"><BigButton icon={AppManIcon} lines={['App Manager']} width="ml-[2px] w-[104px]" /></div>
    </Panel>
  </div>
);

//================== Clash Detective ==================
const testCols = 'grid grid-cols-[35px_349px_75px_75px_75px_81px_94px_27px]';
const th = 'flex items-center border-r border-[#c4c4c4] pl-[10px] pt-2 overflow-hidden whitespace-nowrap';
const td = 'flex items-center border-r border-[#d0d0d0] pl-[2px] overflow-hidden whitespace-nowrap';

const TestsTable = () => (
  <div className="mx-[19px] mt-[17px] h-[178px] w-[834px] border border-[#5f86ab] bg-white tracking-[-0.06px]">
    <div className={`${testCols} h-[38px] w-[811px] border-b border-[#b5b5b5] bg-gradient-to-b from-[#f7f7f7] to-[#dfdfdf]`}>
      <span className={th} />
      <span className={`${th} bg-[#a4cdf5]`}>Name</span>
      <span className={th}>Status</span>
      <span className={`${th} font-bold`}>Clashes</span>
      <span className={th}><i className="mr-[5px] h-[21px] w-[6px] bg-[#f2000d]" />New</span>
      <span className={th}><i className="mr-[5px] h-[21px] w-[6px] bg-[#e39a35]" />Active</span>
      <span className={th}><i className="mr-[5px] h-[21px] w-[6px] shrink-0 bg-[#1cbdf0]" />Reviewed</span>
      <span className="flex items-center overflow-hidden pl-[10px] pt-2"><i className="mr-[5px] h-[21px] w-[6px] shrink-0 bg-[#00f614]" />A</span>
    </div>
    <div className="flex h-[117px]">
      <div className="w-[811px]">
        {tests.map((r, i) => (
          <div key={r[0]} className={`${testCols} h-[29px] border-b border-[#d0d0d0] ${testRowBg[i]}`}>
            <span className={td} />
            <span className={td}>{r[0]}</span>
            <span className={td}>{r[1]}</span>
            <span className={`${td} font-bold`}>{r[2]}</span>
            <span className={td}>{r[3]}</span>
            <span className={td}>0</span>
            <span className={td}>0</span>
            <span className="flex items-center pl-[2px]">0</span>
          </div>
        ))}
      </div>
      <div className="flex w-[21px] flex-col items-center bg-[#efefef] text-[#9b9b9b]">
        <Chevron dir="up" className="mt-[6px] h-[11px] w-[11px]" />
        <span className="mt-[6px] h-[10px] w-full bg-[#cdcdcd]" />
        <Chevron dir="down" className="mb-[4px] mt-auto h-[11px] w-[11px]" />
      </div>
    </div>
    <div className="flex h-[21px] w-[811px] items-center bg-[#efefef] text-[#9b9b9b]">
      <span className="flex w-[21px] justify-center"><Chevron dir="left" className="h-[11px] w-[11px]" /></span>
      <span className="h-full w-[622px] bg-[#cdcdcd]" />
      <Chevron dir="right" className="ml-auto mr-[5px] h-[11px] w-[11px]" />
    </div>
  </div>
);

const clashCols = 'grid grid-cols-[138px_25px_25px_94px_132px_122px_39px]';
const ch = 'flex items-center justify-center border-r border-[#c3cdd8] whitespace-nowrap overflow-hidden';

const ResultsTable = () => (
  <div className="flex h-[330px] w-[598px] border border-[#666] bg-white text-[14.5px] tracking-[-0.05px]">
    <div className="w-[575px]">
      <div className={`${clashCols} h-[32px] border-b border-[#b9c4d0] bg-gradient-to-b from-[#f0f7fd] to-[#dfecf9] tracking-normal text-[#1e2a57]`}>
        <span className={`${ch} pl-[2px]`}>Name</span>
        <span className={ch}><CameraIcon className="h-[18px] w-5" /></span>
        <span className={ch}><CommentIcon className="h-[20px] w-5" /></span>
        <span className={`${ch} pl-[2px]`}>Status</span>
        <span className={`${ch} pl-[2px]`}>Level</span>
        <span className={`${ch} pr-[2px] tracking-[-0.05px]`}>Grid Intersecti...</span>
        <span />
      </div>
      {clashes.map((c, i) => {
        const sel = i === 0;
        return (
          <div key={c.name} className={`${clashCols} h-[27.5px] ${sel ? 'bg-[#0078d7] text-white' : 'border-b border-[#cfcfcf] bg-white'}`}>
            <span className={`flex items-center text-black ${sel ? 'border-2 border-[#0c2340] bg-[#d8ebfb] pl-[21px]' : 'pl-[23px]'}`}>
              <i className="mr-[6px] h-[12px] w-[12px] rounded-full border border-[#a04040] bg-[#ee0011]" />{c.name}
            </span>
            <span className="flex items-center justify-center">{c.cam && <CameraIcon className="h-[18px] w-5" />}</span>
            <span />
            <span className="flex items-center justify-between">
              New
              <i className={`mr-0.5 flex h-[24px] w-[18px] items-center justify-center text-black ${sel ? 'bg-white' : 'bg-[#f0f0f0]'}`}><Caret className="h-[5px] w-[9px]" /></i>
            </span>
            <span className="flex items-center whitespace-nowrap pl-[2px]">{c.level}</span>
            <span className="flex items-center whitespace-nowrap pl-[3px]">{c.grid}</span>
            <span className="flex items-center overflow-hidden whitespace-nowrap pl-[2px]">{c.time}</span>
          </div>
        );
      })}
      <div className="flex h-[21px] items-center bg-[#efefef] text-[#9b9b9b]">
        <span className="flex w-[21px] justify-center"><Chevron dir="left" className="h-[11px] w-[11px]" /></span>
        <span className="h-full w-[222px] bg-[#cbcbcb]" />
        <Chevron dir="right" className="ml-auto mr-[5px] h-[11px] w-[11px]" />
      </div>
    </div>
    <div className="flex w-[21px] flex-col items-center bg-[#efefef] pb-[21px] text-[#9b9b9b]">
      <Chevron dir="up" className="mt-[6px] h-[11px] w-[11px]" />
      <span className="mt-[5px] h-[23px] w-full bg-[#cbcbcb]" />
      <Chevron dir="down" className="mb-[4px] mt-auto h-[11px] w-[11px]" />
    </div>
  </div>
);

const DisplaySettings = () => (
  <div className="ml-[13px] flex h-[330px] w-[249px]">
    <div className="h-[330px] w-[198px] overflow-hidden border-l border-t border-[#ddd] bg-gradient-to-b from-[#f1f1f1] to-[#e5e5e5] pl-[9px]">
      <fieldset className="mt-[9px] h-[121px] w-[178px] rounded border border-[#777] pl-[9px] shadow-[0_1px_0_#fff]">
        <legend className="ml-[-2px] px-[3px] leading-[21px]">Highlighting</legend>
        <div className="mt-[2px] flex">
          <div className={`${toggled} h-[31px] w-[80px] gap-2 rounded-l`}>Item 1 <i className="h-3 w-3 rounded-sm bg-[#ee7584]" /></div>
          <div className={`${toggled} -ml-px h-[31px] w-[80px] gap-2 rounded-r`}>Item 2 <i className="h-3 w-3 rounded-sm bg-[#75dd80]" /></div>
        </div>
        <Combo label="Use item colors" cls="mt-[3px] h-[27px] w-[158px]" />
        <div className="mt-[7px]"><Check label="Highlight all clashes" /></div>
      </fieldset>
      <fieldset className="mt-[7px] h-[103px] w-[178px] rounded border border-[#777] pl-[8px] shadow-[0_1px_0_#fff]">
        <legend className="ml-[-1px] px-[3px] leading-[21px]">Isolation</legend>
        <div className="flex">
          <div className={`${btn} h-[31px] w-[78px] rounded-l whitespace-nowrap`}>Dim Other</div>
          <div className={`${toggled} -ml-px h-[31px] w-[83px] rounded-r whitespace-nowrap`}>Hide Other</div>
        </div>
        <div className="ml-px mt-[2px] flex flex-col gap-[4px]">
          <Check label="Transparent dimming" off />
          <Check label="Auto reveal" />
        </div>
      </fieldset>
      <fieldset className="mt-[5px] h-[110px] w-[178px] rounded border border-[#777] pl-[8px]">
        <legend className="ml-[-1px] px-[3px] leading-[21px]">Viewpoint</legend>
        <Combo label="Auto-update" cls="h-[27px] w-[160px]" />
        <div className="ml-px mt-[2px]"><Check label="Animate transitions" /></div>
        <div className="ml-px mt-[7px] h-[30px] w-[158px] rounded border border-[#777] bg-[#f4f4f4]" />
      </fieldset>
    </div>
    <div className="flex w-[21px] flex-col items-center bg-[#efefef] text-[#9b9b9b]">
      <Chevron dir="up" className="mt-[6px] h-[11px] w-[11px]" />
      <span className="mt-[4px] h-[177px] w-full bg-[#cbcbcb]" />
      <Chevron dir="down" className="mb-[4px] mt-auto h-[11px] w-[11px]" />
    </div>
    <div className="flex w-[30px] flex-col items-center border-y border-l border-[#555] bg-[#f3f3f3]">
      <Chevron dir="right" className="ml-0.5 mt-[7px] h-[12px] w-[12px] text-[#888]" w={3.5} />
      <span className="mr-[2px] mt-[8px] whitespace-nowrap tracking-[-0.1px] [writing-mode:vertical-rl]">Display Settings</span>
    </div>
  </div>
);

const ClashPanel = () => (
  <div className="flex h-[794px] w-[895px] shrink-0 flex-col border border-[#5a5a5a] bg-[#ececec] text-[13.5px] tracking-[-0.1px] text-[#111]">
    <div className="flex h-[22px] items-center border-b border-[#555] bg-gradient-to-b from-[#c3dcf4] to-[#b4d4f2] pl-[5px] pt-px text-[14px] tracking-[-0.35px]">
      Clash Detective
      <svg viewBox="0 0 14 12" className="ml-auto h-3 w-[13px]" fill="#999" stroke="#555"><path d="M0 12l5-4" /><path d="M4 4l4 5 2-1 1-3 2-2-2-2-3 2z" /></svg>
      <svg viewBox="0 0 10 10" className="ml-[11px] mr-[6px] h-[9px] w-[9px]" stroke="#111" strokeWidth="2"><path d="M1 1l8 8M9 1L1 9" /></svg>
    </div>
    <div className="flex h-[770px]">
      <div className="h-[770px] w-[873px] overflow-hidden bg-gradient-to-b from-[#f4f4f4] via-[#e8e8e8] to-[#dedede]">
        <div className="flex h-[46px] items-center border-b border-[#b4b4b4] pl-[12px] pr-[18px] pt-3">
          <Chevron dir="up" className="h-[16px] w-[16px] text-[#a8a8a8]" w={3} />
          <span className="ml-[12px] text-[18px] tracking-[-0.33px]">014 AR Exterior Wall-vs-STR Columns</span>
          <span className="ml-auto mt-1 whitespace-pre tracking-[-0.02px]">Last Run:  Tuesday, November 19, 2024 5:56:17 PM</span>
        </div>
        <div className="flex h-[24px] items-center justify-end whitespace-pre pr-[18px] tracking-[0.06px]">Clashes -  Total:  113  (Open:  14  Closed:  99 )</div>
        <TestsTable />
        <div className="mt-[6px] flex h-[32px] pl-[19px]">
          <div className={`${btn} w-[94px] gap-1.5 rounded pr-1`}><AddTestIcon className="h-5 w-5" />Add Test</div>
          <div className={`${btn} ml-3 w-[95px] rounded-l`}>Reset All</div>
          <div className={`${btn} -ml-px w-[95px]`}>Compact All</div>
          <div className={`${btn} -ml-px w-[95px] rounded-r`}>Delete All</div>
          <div className={`${btn} ml-[17px] w-[105px] gap-[3px] rounded pr-1`}><UpdateIcon className="h-5 w-5" />Update All</div>
          <div className={`${btn} ml-auto mr-5 w-[54px] gap-2 rounded pr-1.5`}><ExportIcon className="h-5 w-5" /><Caret className="h-[4px] w-[7px]" /></div>
        </div>
        <div className="mt-[6px] flex h-[37px] items-end border-t border-white bg-[#dfdfdf] pl-[19px] shadow-[inset_0_-1px_0_#8a8a8a]">
          <span className={`${btn} h-[32px] w-[63px] border-[#8a8a8a]`}>Rules</span>
          <span className={`${btn} -ml-px h-[32px] w-[61px] border-[#8a8a8a]`}>Select</span>
          <span className="-ml-px flex h-[34px] w-[67px] items-center justify-center border border-b-0 border-[#8a8a8a] bg-[#ededed] pt-px">Results</span>
          <span className={`${btn} -ml-px h-[32px] w-[60px] border-[#8a8a8a] pr-1`}>Report</span>
        </div>
        <div className="bg-gradient-to-b from-[#f4f4f4] to-[#e2e2e2]">
          <div className="flex h-[60px] items-start pl-[12px] pt-[12px]">
            <div className="flex h-[35px]">
              <div className={`${btn} w-[109px] gap-1 rounded-l whitespace-nowrap`}><NewGroupIcon className="h-5 w-5" />New Group</div>
              <div className={`${btn} -ml-px w-[32px] text-[#444]`}><GroupIcon className="h-5 w-5" /></div>
              <div className={`${btn} -ml-px w-[32px] border-[#aaa] text-[#b5b5b5]`}><GroupIcon className="h-5 w-5" mark="plus" /></div>
              <div className={`${btn} -ml-px w-[31px] rounded-r border-[#aaa] text-[#b5b5b5]`}><GroupIcon className="h-5 w-5" mark="x" /></div>
              <div className={`${btn} ml-[6px] w-[82px] gap-[3px] rounded-l pr-1`}><AssignIcon className="h-5 w-5" />Assign</div>
              <div className={`${btn} -ml-px w-[31px] rounded-r border-[#aaa]`}><AssignIcon className="h-5 w-5" off /></div>
              <div className={`${btn} ml-[6px] w-[31px] rounded`}><CommentAddIcon className="h-5 w-5" /></div>
            </div>
            <div className="ml-[217px] mt-px flex h-[33px] w-[93px] items-center border border-[#acacac] bg-[#ebebeb] pl-[9px]">
              <FunnelIcon className="h-5 w-5" /><span className="ml-[3px]">None</span>
              <Chevron dir="down" className="ml-auto mr-[6px] h-[9px] w-[9px] text-[#555]" />
            </div>
            <div className={`${btn} ml-[7px] h-[35px] w-[32px] rounded-l`}><ResetArrowIcon className="h-[18px] w-5" /></div>
            <div className={`${btn} -ml-px h-[35px] w-[31px] rounded-r`}><ConeIcon className="h-5 w-5" /></div>
            <div className={`${btn} ml-[6px] h-[35px] w-[106px] gap-[6px] rounded whitespace-nowrap tracking-[-0.2px]`}><SyncIcon className="h-5 w-5" fill="#4aa548" stroke="#216b23" />Re-run Test</div>
          </div>
          <div className="flex pl-[12px]">
            <ResultsTable />
            <DisplaySettings />
          </div>
        </div>
        <div className="mt-[4px] h-px bg-white" />
        <div className="ml-[12px] mt-[6px] flex h-[30px] w-[847px] items-center border border-[#777] bg-gradient-to-b from-[#fafafa] to-[#dedede] pl-[6px] pt-px">
          <Chevron dir="up" className="h-[14px] w-[14px] text-[#a0a0a0]" w={3} />
          <span className="ml-[13px]">Items</span>
        </div>
      </div>
      <div className="flex w-5 flex-col items-center bg-[#efefef] text-[#555]">
        <Chevron dir="up" className="mt-[5px] h-[12px] w-[12px]" />
        <span className="mt-[4px] h-[721px] w-full bg-[#cbcdcc]" />
        <Chevron dir="down" className="mt-[9px] h-[12px] w-[12px]" />
      </div>
    </div>
  </div>
);

//================== 3D view ==================
const Scene = () => (
  <svg viewBox="917.5 183 971 794" className="block h-[794px] w-[971px]">
    <defs>
      <linearGradient id="sky" x1="0" y1="0" x2="0" y2="1">
        <stop offset="0" stopColor="#698de8" />
        <stop offset="0.5" stopColor="#9cbcf2" />
        <stop offset="0.8" stopColor="#bfdefa" />
        <stop offset="1" stopColor="#ceedff" />
      </linearGradient>
      <radialGradient id="shade"><stop offset="0" stopColor="#3b5ba8" stopOpacity=".6" /><stop offset="1" stopColor="#3b5ba8" stopOpacity="0" /></radialGradient>
      <pattern id="dots" width="3" height="3" patternUnits="userSpaceOnUse"><rect width="3" height="3" fill="#37d42c" /><rect width="1.600" height="1.600" fill="#176b1a" /></pattern>
    </defs>
    <rect x="917" y="183" width="973" height="794" fill="url(#sky)" />
    {/* wall */}
    <path d="M1106 351l81-16 22 3-81 18z" fill="#2a2a85" />
    <path d="M1106 350l22 6 70 591-17-11z" fill="#4035cb" />
    <path d="M1128 356l81-18 46 562-57 47z" fill="#352ca9" />
    {/* column */}
    <path d="M1198 430l19-5 23 5-17 6z" fill="url(#dots)" />
    <path d="M1198 430l25 5.500 28 366.500-20-11z" fill="#41ff35" />
    <path d="M1223 435.500l17-5.500 26 361-15 11z" fill="#36d42b" />
    {/* view cube */}
    <ellipse cx="1799" cy="308" rx="64" ry="28.500" fill="none" stroke="#90a6e0" strokeWidth="13" opacity=".85" />
    <ellipse cx="1799" cy="308" rx="72" ry="34" fill="none" stroke="#6c88cf" />
    <ellipse cx="1799" cy="308" rx="57" ry="23" fill="none" stroke="#6c88cf" />
    <ellipse cx="1799" cy="306" rx="44" ry="15" fill="url(#shade)" />
    <g stroke="#7183b3">
      <path d="M1776 239l51 2-2 19-57-2z" fill="#92a7e3" />
      <path d="M1768 258l57 2-2 51-54-2.500z" fill="#8aa0dd" />
    </g>
    <g fill="#6379b2" fontFamily="Open Sans, sans-serif" fontWeight="700" textAnchor="middle">
      <text x="1796" y="290" fontSize="13">RIGHT</text>
      <text x="1799" y="251" fontSize="7" transform="rotate(180 1799 248)">TOP</text>
      <g fill="#b4c4ee" stroke="#5f76ba" strokeWidth=".8" fontSize="15">
        <text x="1734" y="303" transform="rotate(15 1734 298)">S</text>
        <text x="1865" y="309" transform="rotate(80 1865 304)">N</text>
        <text x="1790" y="343">E</text>
      </g>
    </g>
    {/* navigation bar */}
    <rect x="1847" y="374" width="40" height="350" rx="4" fill="#c3d6f5" fillOpacity=".38" stroke="#7d95cb" strokeWidth="1.500" />
    <g fill="#c9daf4" fillOpacity=".8" stroke="#8195c2" strokeWidth="1.300">
      <circle cx="1880" cy="381" r="4" fill="#8fa3d0" />
      <circle cx="1880" cy="716" r="4" fill="#a9bde0" />
      <path d="M1867 398h13v13a13 13 0 11-13-13z" /><circle cx="1867" cy="411" r="7" />
      <path d="M1862 476c-3-5-6-9-9-12 2-3 5 0 7 2l-3-12c2-2 4 0 5 2l2 7v-12c2-2 4-1 4 2v10l3-10c3-1 4 1 3 3l-2 10 5-7c3 0 3 2 2 4-3 5-4 9-6 13z" />
      <rect x="1852" y="485" width="21" height="20" fill="none" /><circle cx="1872" cy="502" r="5.500" /><path d="M1876 506l5 5" strokeWidth="3" />
      <g fill="none" strokeWidth="2"><ellipse cx="1867" cy="546" rx="13" ry="5" /><ellipse cx="1867" cy="546" rx="4.500" ry="12" /></g>
      <path d="M1854 597c-4 4 0 9 6 8m20-8c4 4 0 9-6 8" fill="none" strokeWidth="2" /><circle cx="1867" cy="590" r="10.500" fill="#dcebf8" /><circle cx="1867" cy="590" r="5" fill="#95aac9" /><circle cx="1867" cy="590" r="2" fill="#40567f" />
      <ellipse cx="1861" cy="632" rx="4" ry="6" /><circle cx="1861" cy="642" r="2.500" /><ellipse cx="1873" cy="640" rx="4" ry="6" /><circle cx="1873" cy="650" r="2.500" />
      <path d="M1859 674l17 15-8 1 6 10-4 1-5-9-6 5z" fill="#dbe7f5" strokeWidth="1.800" />
    </g>
    <g fill="#7e94c4">
      {[433, 521, 568, 615, 662].map(y => <path key={y} d={`M1864 ${y}h7l-3.500 4z`} />)}
    </g>
  </svg>
);

//================== Bottom bars ==================
const dockTab = 'flex h-[21px] items-center justify-center border border-b-0 border-[#555] bg-gradient-to-b from-[#a8a8a8] to-[#dadada] whitespace-nowrap';

const DockTabs = () => (
  <div className="flex h-[25px] items-end bg-gradient-to-b from-[#a0a0a0] to-[#8f8f8f] pl-[21px] text-[14px] tracking-[-0.45px] text-[#111]">
    <span className={`${dockTab} w-[169px] pr-[3px]`}>Quantification Workbook</span>
    <span className={`${dockTab} -ml-px w-[95px] pr-[3px]`}>Item Catalog</span>
    <span className={`${dockTab} -ml-px w-[124px] pr-1`}>Resource Catalog</span>
    <span className={`${dockTab} ml-[9px] w-[75px] pr-0.5`}>TimeLiner</span>
  </div>
);

const Meter: React.FC<{ fill: string; children: React.ReactNode }> = ({ fill, children }) => (
  <div className="mr-[5px] flex w-[38px] shrink-0 flex-col">
    <svg viewBox="0 0 18 10" className="ml-px h-[11px] w-[18px]" fill="#bbb" stroke="#222">{children}</svg>
    <div className="mt-px h-[9px] border border-black bg-[#d3d3d3]"><div className={`h-full bg-[#0000fa] ${fill}`} /></div>
  </div>
);

const StatusBar = () => (
  <div className="flex h-[28px] items-center bg-[#a0a0a0] pl-1 text-[14px] text-[#111]">
    <span className="w-[1522px] shrink-0 whitespace-nowrap pt-px tracking-[-0.3px]">AutoSaved: C:\Users\zas\AppData\Roaming\Autodesk\Navisworks Manage 2023\AutoSave\NS-BIM-AR-B10-G14-FED 300- 01-11-2024.Autosave1.nwf</span>
    <svg viewBox="0 0 42 20" className="h-5 w-[42px] shrink-0" fill="#ababab" stroke="#8a8a8a" strokeWidth="1.300"><path d="M11 1v18L1 10zM16 1h5v18h-5zM39 1v18l-10-9z" /></svg>
    <span className="ml-[19px] w-[36px] shrink-0 whitespace-nowrap text-[13.5px]">1 of 1</span>
    <svg viewBox="0 0 42 20" className="ml-[18px] h-5 w-[42px] shrink-0" fill="#ababab" stroke="#8a8a8a" strokeWidth="1.300"><path d="M2 1v18l10-9zM21 1h5v18h-5zM30 1v18l10-9z" /></svg>
    <svg viewBox="0 0 20 19" className="ml-0.5 h-[19px] w-5 shrink-0"><rect x=".5" y=".5" width="19" height="18" fill="#eee" stroke="#444" /><path d="M1 1h18v3H1z" fill="#555" /><path d="M3 8h3M3 13h3" stroke="#336" strokeWidth="2.500" /><path d="M8 8h9M8 13h9" stroke="#777" strokeWidth="1.500" /></svg>
    <span className="ml-[10px] mr-[15px] h-[22px] w-[3px] shrink-0 border-l border-[#666] bg-white" />
    <Meter fill="w-full"><path d="M1 3h12l4 2.500L13 8H1z" /><path d="M1 3h3v5H1z" fill="#c22" /></Meter>
    <Meter fill="w-[34px]"><path d="M1 3v5c0 2 8 2 8 0V3" /><ellipse cx="5" cy="2.500" rx="4" ry="2" /></Meter>
    <Meter fill="w-0"><path d="M1 1h4v2H1zM13 1h4v2h-4zM7 0h4v3H7zM3 6h3v3H3zM12 6h3v3h-3zM8 6h2v3H8zM5 2h8M9 3L5 6m4-3l4 3" /></Meter>
    <span className="ml-[4px] whitespace-nowrap text-[12px] tracking-[-0.5px]">1589 MB</span>
  </div>
);

const AdskTile: React.FC<{ letter: string; sub: string }> = ({ letter, sub }) => (
  <div className="flex h-[30px] w-[28px] flex-col items-center border-l-4 border-[#0f56c8] bg-[#1b6cf5] text-white">
    <span className="h-[20px] text-[16px] font-bold leading-5">{letter}</span>
    <span className="h-[10px] w-full bg-[#0e3c92] text-center text-[8px] font-bold leading-[10px]">{sub}</span>
  </div>
);
const P6Tile = () => <div className="flex h-[30px] w-[30px] items-center justify-center bg-[#f3000f] font-['Liberation_Sans'] text-[21px] tracking-[-1px] text-white">P6</div>;
const OfficeTile: React.FC<{ color: string; letter: string }> = ({ color, letter }) => (
  <svg viewBox="0 0 28 28" className="h-7 w-7"><rect x="14" y="4" width="13" height="20" fill="#fff" stroke={color} /><path d="M17 9h8M17 13h8M17 17h8M17 20h8" stroke={color} strokeWidth="1.800" /><path d="M1 4l16-3v26L1 24z" fill={color} /><text x="9" y="20" fontSize="15" fontWeight="700" fill="#fff" textAnchor="middle" fontFamily="Open Sans, sans-serif">{letter}</text></svg>
);

const apps: { icon: React.ReactNode; line?: boolean; active?: boolean }[] = [
  { icon: <svg viewBox="0 0 30 28" className="h-[28px] w-[30px]"><path d="M9 1h9c3 0 4 3 5 6h-6L12 20c-1 3-3 3-5 3C1 22-1 18 2 11l3-7c1-2 2-3 4-3z" fill="#2fa3dc" /><path d="M2 12c3 2 8 0 12-1l-3 10c-2 3-6 2-8 0-2-3-2-6-1-9z" fill="#d9c63a" /><path d="M18 7h6c5 0 7 4 5 9l-3 7c-1 3-3 4-5 4h-9c-2 0-3-2-3-4 3 0 4-2 5-4z" fill="#e8718c" /><path d="M18 7h6c5 0 6 4 5 8l-12-1z" fill="#a56ad8" /></svg> },
  { icon: <svg viewBox="0 0 30 30" className="h-[30px] w-[30px]"><circle cx="15" cy="15" r="15" fill="#1378c8" /><path d="M1 12C4-3 28-3 30 14c0 6-8 8-11 5 2-4 0-9-6-9-6 0-10 3-11 7z" fill="#35c1c8" /><path d="M18 1c8 1 12 7 12 13 0 6-8 8-11 5 3-4 2-12-1-18z" fill="#4fd07a" /><path d="M11 14c-3 8 4 14 14 12C15 34 4 27 4 19c0-5 4-8 8-9z" fill="#1253a0" /></svg> },
  { icon: <svg viewBox="0 0 28 24" className="h-6 w-7"><path d="M0 1h11l2 3h15v19H0z" fill="#e09b28" /><path d="M0 6h28v17H0z" fill="#fbd06a" /><path d="M5 23v-9h18v9h-5v-4h-8v4z" fill="#3f97dd" /></svg>, line: true },
  { icon: <AdskTile letter="R" sub="RVT" /> },
  { icon: <AdskTile letter="N" sub="MAN" />, active: true, line: true },
  { icon: <OfficeTile color="#d2382a" letter="P" />, line: true },
  { icon: <svg viewBox="0 0 30 30" className="h-[30px] w-[30px]"><rect width="30" height="30" fill="#f1efe6" /><path d="M4 26L14 4h5l6 22h-5l-2-7h-6l-3 7zM14 15h4l-1-6z" fill="#c4302b" /></svg> },
  { icon: <svg viewBox="0 0 30 30" className="h-[30px] w-[30px]"><circle cx="15" cy="15" r="15" fill="#fc3" /><path d="M15 15L2 7.500A15 15 0 0128 7.500z" fill="#df4437" /><path d="M15 15l-1 15A15 15 0 012 7.500z" fill="#3aa552" /><circle cx="15" cy="15" r="7.500" fill="#fff" /><circle cx="15" cy="15" r="6" fill="#3b80ef" /></svg>, line: true },
  { icon: <span className="flex h-[30px] w-[30px] items-center justify-center rounded-full bg-[#1564f4] text-[9.5px] font-semibold leading-none text-white">zoom</span> },
  { icon: <span className="relative"><FaWhatsapp className="h-[31px] w-[31px] text-[#2bd366]" /><span className="absolute -right-3 top-3.5 flex h-6 w-6 items-center justify-center rounded-full border border-[#aaa] bg-[#3b3b3b] text-[13px] font-semibold text-white">39</span></span>, line: true },
  { icon: <OfficeTile color="#1d7a43" letter="X" /> },
  { icon: <span className="flex h-[30px] w-[30px] items-center justify-center rounded-sm bg-[#0f7ac0]"><FaLinkedinIn className="h-[22px] w-[22px] text-white" /></span> },
  { icon: <P6Tile /> },
  { icon: <span className="flex h-[30px] w-[29px] flex-col items-center border-2 border-[#cfdde2] bg-[#3d7288] text-[11px] font-bold leading-[10px] text-white"><svg viewBox="0 0 24 14" className="h-[15px] w-6" stroke="#e8f0f2" fill="#e8f0f2"><path d="M0 12C8 13 14 8 18 0M13 7l10 6" fill="none" strokeWidth="1.500" /><ellipse cx="8" cy="4" rx="4" ry="1.700" transform="rotate(35 8 4)" /></svg>11</span>, line: true },
  { icon: <AdskTile letter="R" sub="RVT" />, line: true },
  { icon: <P6Tile />, line: true },
];

const Taskbar = () => (
  <div className="flex h-[48px] bg-[#403f3d] text-white">
    <div className="flex w-[57px] items-center pl-[14px]">
      <svg viewBox="0 0 20 20" className="h-5 w-5" fill="#fff"><path d="M0 3l9-1.300V9.500H0zM10 1.500L20 0v9.500H10zM0 10.500h9v7.800L0 17zM10 10.500h10V20l-10-1.500z" /></svg>
    </div>
    {apps.map((a, i) => (
      <div key={i} className={`flex h-[48px] w-[62px] shrink-0 flex-col items-center justify-between ${a.active ? 'bg-[#6a6a69]' : ''}`}>
        <span className="flex h-[46px] items-center pt-[3px]">{a.icon}</span>
        {a.line && <span className={`h-[2px] bg-[#76b9ed] ${a.active ? 'w-full' : 'w-[51px]'}`} />}
      </div>
    ))}
    <div className="ml-auto flex items-center pr-[5px]">
      <Chevron dir="up" className="h-[18px] w-[17px]" w={1.2} />
      <svg viewBox="0 0 20 20" className="ml-[11px] h-5 w-5"><circle cx="10" cy="10" r="10" fill="#f5c726" /><path d="M2 4a10 10 0 0114-2c-5 0-9 1-14 5zM18 16a10 10 0 01-14 2c5 0 10-2 14-5z" fill="#3aa13c" /><path d="M10 6v8M6 10h8" stroke="#2b8a2e" strokeWidth="3" /></svg>
      <svg viewBox="0 0 16 20" className="ml-[13px] h-[19px] w-[16px]" fill="none" stroke="#fff" strokeWidth="1.300"><rect x="1" y="5" width="9" height="10" rx="1.500" /><path d="M10 9l5-3v8l-5-3M3 2c2-2 6-2 8 0M3 18c2 2 6 2 8 0" /></svg>
      <svg viewBox="0 0 20 14" className="ml-[11px] h-[14px] w-[20px]" fill="none" stroke="#fff" strokeWidth="1.300"><path d="M6 3h12v9H5V8" /><path d="M8 5h5v5H8z" fill="#fff" /><path d="M18 6h2v3h-2M1 0v3m3-3v3M0 3h5v2L3 7v4" /></svg>
      <svg viewBox="0 0 17 17" className="ml-[13px] h-[17px] w-[17px]" fill="none" stroke="#ccc" strokeWidth="1.300"><path d="M1 16C1 7 7 1 16 1M5 16c0-6 5-11 11-11M9 16c0-4 3-7 7-7" /><circle cx="14.500" cy="14.500" r="1.300" fill="#fff" /></svg>
      <svg viewBox="0 0 20 16" className="ml-[11px] h-[16px] w-[20px]" fill="none" stroke="#fff" strokeWidth="1.300"><path d="M1 5h3l4-4v14l-4-4H1zM11 5c1 2 1 4 0 6M14 3c2 3 2 7 0 10M17 1c3 4 3 10 0 14" /></svg>
      <span className="ml-[12px] pt-0.5 text-[14.5px] tracking-[-0.2px]">ENG</span>
      <div className="ml-[11px] flex w-[78px] flex-col items-center pt-px text-[14px] leading-[23px] tracking-[-0.2px]">
        <span>6:06 PM</span>
        <span>11/19/2024</span>
      </div>
      <div className="relative ml-[18px] h-[42px] w-[38px]">
        <svg viewBox="0 0 20 20" className="mt-[9px] h-5 w-5" fill="#fff"><path d="M0 0h20v16H9l-4 4v-4H0z" /><path d="M3 4h14M3 8h14M3 12h8" stroke="#403f3d" strokeWidth="1.300" /></svg>
        <span className="absolute left-[10px] top-[21px] flex h-5 w-5 items-center justify-center rounded-full border border-[#999] bg-[#3b3b3b] text-[13px] font-semibold">3</span>
      </div>
      <span className="ml-[7px] h-[48px] w-px bg-[#8a8a8a]" />
    </div>
  </div>
);

//================== Page ==================
const sideTab = 'border border-[#555] bg-gradient-to-r from-[#a8a8a8] to-[#dcdcdc] [writing-mode:vertical-rl] whitespace-nowrap overflow-hidden';

const App = () => (
  <div className="relative flex h-[1078px] w-[1914px] flex-col overflow-hidden bg-[#9b9b9b] font-['Open_Sans','Noto_Sans',sans-serif] leading-[1.2]">
    <TitleBar />
    <RibbonTabs />
    <Ribbon />
    <div className="flex h-[797px] bg-gradient-to-b from-[#a0a0a0] to-[#949494] pt-[3px] text-[14px] tracking-[-0.45px] text-black">
      <div className="w-[20px] shrink-0 pt-[2px]">
        <div className={`${sideTab} flex h-[40px] w-[15px] items-center justify-center border-l-0`}><span className="mr-[6px]">Sets</span></div>
        <div className={`${sideTab} -mt-px flex h-[102px] w-[15px] items-center border-l-0 pt-[4px]`}><span className="mr-[6px]">Selection Tree</span></div>
      </div>
      <ClashPanel />
      <div className="relative ml-[3px] w-[971px] shrink-0">
        <Scene />
        <div className="absolute left-[29px] top-[738px] flex h-[27px] w-[108px] items-center justify-center border-2 border-[#8d9ba3] bg-[#b3c5cc] font-['DejaVu_Sans'] text-[16px] tracking-[-0.3px] text-white">B-6 : Site (3)</div>
      </div>
      <div className="ml-[4px] w-[21px] shrink-0 pt-[2px]">
        <div className={`${sideTab} flex h-[76px] w-[21px] items-center border-r-0 pt-[4px]`}>Properties</div>
        <div className={`${sideTab} -mt-px flex h-[123px] w-[21px] items-center border-r-0 pt-[4px]`}>Saved Viewpoints</div>
      </div>
    </div>
    <DockTabs />
    <StatusBar />
    <Taskbar />
    {/* watermark */}
    <svg viewBox="0 0 236 110" className="absolute left-[840px] top-[945px] h-[110px] w-[236px] opacity-40" fill="#c8c8c8">
      <text x="118" y="67" fontSize="64" fontWeight="700" fontFamily="DejaVu Sans, sans-serif" textAnchor="middle" textLength="226" lengthAdjust="spacingAndGlyphs" direction="rtl" stroke="#c8c8c8" strokeWidth="4" strokeLinejoin="round">مستقل</text>
      <text x="118" y="103" fontSize="36" fontWeight="700" fontFamily="Liberation Sans, sans-serif" textAnchor="middle" textLength="230" lengthAdjust="spacingAndGlyphs">mostaql.com</text>
    </svg>
  </div>
);

export default App;
